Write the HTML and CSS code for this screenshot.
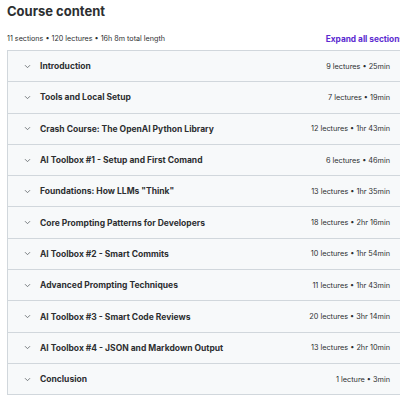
FILE: index.html
```html
<!DOCTYPE html>
<html lang="en">
<head>
  <meta charset="UTF-8" />
  <title>Course content</title>
  <link rel="stylesheet" href="styles.css">
</head>
<body>
  <div class="curriculum">
    <h2>Course content</h2>
    <div class="summary">
      <span>11 sections • 120 lectures • 16h 8m total length</span>
      <button class="expand">Expand all sections</button>
    </div>

    <div class="sections">
      <div class="section">
        <span class="chevron"><svg width="7" height="5" viewBox="0 0 7 5"><path d="M1 1.2 3.5 3.7 6 1.2" fill="none" stroke="#6a6f73" stroke-width="0.9"/></svg></span>
        <span class="title">Introduction</span>
        <span class="info">9 lectures • 25min</span>
      </div>
      <div class="section">
        <span class="chevron"><svg width="7" height="5" viewBox="0 0 7 5"><path d="M1 1.2 3.5 3.7 6 1.2" fill="none" stroke="#6a6f73" stroke-width="0.9"/></svg></span>
        <span class="title">Tools and Local Setup</span>
        <span class="info">7 lectures • 19min</span>
      </div>
      <div class="section">
        <span class="chevron"><svg width="7" height="5" viewBox="0 0 7 5"><path d="M1 1.2 3.5 3.7 6 1.2" fill="none" stroke="#6a6f73" stroke-width="0.9"/></svg></span>
        <span class="title">Crash Course: The OpenAI Python Library</span>
        <span class="info">12 lectures • 1hr 43min</span>
      </div>
      <div class="section">
        <span class="chevron"><svg width="7" height="5" viewBox="0 0 7 5"><path d="M1 1.2 3.5 3.7 6 1.2" fill="none" stroke="#6a6f73" stroke-width="0.9"/></svg></span>
        <span class="title">AI Toolbox #1 - Setup and First Comand</span>
        <span class="info">6 lectures • 46min</span>
      </div>
      <div class="section">
        <span class="chevron"><svg width="7" height="5" viewBox="0 0 7 5"><path d="M1 1.2 3.5 3.7 6 1.2" fill="none" stroke="#6a6f73" stroke-width="0.9"/></svg></span>
        <span class="title">Foundations: How LLMs "Think"</span>
        <span class="info">13 lectures • 1hr 35min</span>
      </div>
      <div class="section">
        <span class="chevron"><svg width="7" height="5" viewBox="0 0 7 5"><path d="M1 1.2 3.5 3.7 6 1.2" fill="none" stroke="#6a6f73" stroke-width="0.9"/></svg></span>
        <span class="title">Core Prompting Patterns for Developers</span>
        <span class="info">18 lectures • 2hr 16min</span>
      </div>
      <div class="section">
        <span class="chevron"><svg width="7" height="5" viewBox="0 0 7 5"><path d="M1 1.2 3.5 3.7 6 1.2" fill="none" stroke="#6a6f73" stroke-width="0.9"/></svg></span>
        <span class="title">AI Toolbox #2 - Smart Commits</span>
        <span class="info">10 lectures • 1hr 54min</span>
      </div>
      <div class="section">
        <span class="chevron"><svg width="7" height="5" viewBox="0 0 7 5"><path d="M1 1.2 3.5 3.7 6 1.2" fill="none" stroke="#6a6f73" stroke-width="0.9"/></svg></span>
        <span class="title">Advanced Prompting Techniques</span>
        <span class="info">11 lectures • 1hr 43min</span>
      </div>
      <div class="section">
        <span class="chevron"><svg width="7" height="5" viewBox="0 0 7 5"><path d="M1 1.2 3.5 3.7 6 1.2" fill="none" stroke="#6a6f73" stroke-width="0.9"/></svg></span>
        <span class="title">AI Toolbox #3 - Smart Code Reviews</span>
        <span class="info">20 lectures • 3hr 14min</span>
      </div>
      <div class="section">
        <span class="chevron"><svg width="7" height="5" viewBox="0 0 7 5"><path d="M1 1.2 3.5 3.7 6 1.2" fill="none" stroke="#6a6f73" stroke-width="0.9"/></svg></span>
        <span class="title">AI Toolbox #4 - JSON and Markdown Output</span>
        <span class="info">13 lectures • 2hr 10min</span>
      </div>
      <div class="section">
        <span class="chevron"><svg width="7" height="5" viewBox="0 0 7 5"><path d="M1 1.2 3.5 3.7 6 1.2" fill="none" stroke="#6a6f73" stroke-width="0.9"/></svg></span>
        <span class="title">Conclusion</span>
        <span class="info">1 lecture • 3min</span>
      </div>
    </div>
  </div>
</body>
</html>
```

FILE: styles.css
```css
body {
  margin: 0;
  background-color: white;
  font-family: Inter, "Noto Sans", sans-serif;
  color: #2d2f31;
  overflow: hidden;
}
.curriculum {
  width: 418px;
  padding-left: 7px;
}
h2 {
  margin: 0;
  padding-top: 2px;
  font-size: 13px;
  line-height: 18px;
  font-weight: 700;
  color: #2d2f31;
}
.summary {
  display: flex;
  justify-content: space-between;
  align-items: center;
  margin-top: 10px;
  padding-right: 21px;
  height: 17px;
  font-size: 7.2px;
  color: #2d2f31;
}
.expand {
  border: none;
  background: none;
  padding: 0;
  font-family: inherit;
  font-size: 8.3px;
  font-weight: 700;
  color: #5b2bd0;
  white-space: nowrap;
}
.sections {
  margin-top: 3px;
  border: 1px solid #d1d7dc;
  border-bottom: none;
}
.section {
  display: flex;
  align-items: center;
  height: 30.3px;
  background-color: #f7f9fa;
  border-bottom: 1px solid #d1d7dc;
  padding-left: 16px;
  padding-right: 34px;
}
.chevron {
  display: flex;
  width: 16px;
}
.title {
  flex: 1;
  font-size: 8.5px;
  font-weight: 700;
  color: #2d2f31;
}
.info {
  font-size: 7.3px;
  color: #2d2f31;
}
```
